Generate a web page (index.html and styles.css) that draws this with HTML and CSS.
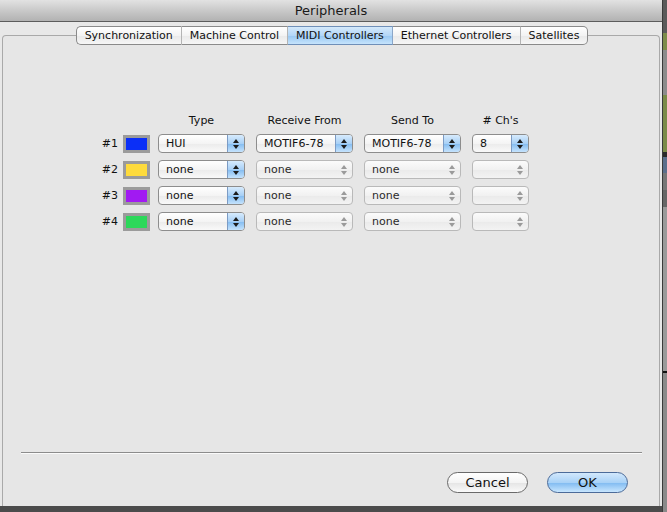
FILE: index.html
```html
<!DOCTYPE html>
<html lang="en">
<head>
    <meta charset="UTF-8">
    <title>Peripherals</title>
    <link rel="stylesheet" href="styles.css">
</head>
<body>
    <div class="screen">
        <div class="window">
            <div class="titlebar">Peripherals</div>
            <div class="content">
                <div class="tabs">
                    <div class="tab first">Synchronization</div>
                    <div class="tab">Machine Control</div>
                    <div class="tab selected">MIDI Controllers</div>
                    <div class="tab">Ethernet Controllers</div>
                    <div class="tab last">Satellites</div>
                </div>
                <div class="panel">
                    <div class="table">
                        <div class="row head">
                            <div class="num"></div>
                            <div class="swatch-col"></div>
                            <div class="col-type">Type</div>
                            <div class="col-port">Receive From</div>
                            <div class="col-port">Send To</div>
                            <div class="col-ch"># Ch's</div>
                        </div>
                        <div class="row">
                            <div class="num">#1</div>
                            <div class="swatch"><span class="blue"></span></div>
                            <div class="popup col-type"><span class="val">HUI</span><span class="arrows"></span></div>
                            <div class="popup col-port"><span class="val">MOTIF6-78</span><span class="arrows"></span></div>
                            <div class="popup col-port"><span class="val">MOTIF6-78</span><span class="arrows"></span></div>
                            <div class="popup col-ch"><span class="val">8</span><span class="arrows"></span></div>
                        </div>
                        <div class="row">
                            <div class="num">#2</div>
                            <div class="swatch"><span class="yellow"></span></div>
                            <div class="popup col-type"><span class="val">none</span><span class="arrows"></span></div>
                            <div class="popup off col-port"><span class="val">none</span><span class="arrows"></span></div>
                            <div class="popup off col-port"><span class="val">none</span><span class="arrows"></span></div>
                            <div class="popup off col-ch"><span class="val"></span><span class="arrows"></span></div>
                        </div>
                        <div class="row">
                            <div class="num">#3</div>
                            <div class="swatch"><span class="purple"></span></div>
                            <div class="popup col-type"><span class="val">none</span><span class="arrows"></span></div>
                            <div class="popup off col-port"><span class="val">none</span><span class="arrows"></span></div>
                            <div class="popup off col-port"><span class="val">none</span><span class="arrows"></span></div>
                            <div class="popup off col-ch"><span class="val"></span><span class="arrows"></span></div>
                        </div>
                        <div class="row">
                            <div class="num">#4</div>
                            <div class="swatch"><span class="green"></span></div>
                            <div class="popup col-type"><span class="val">none</span><span class="arrows"></span></div>
                            <div class="popup off col-port"><span class="val">none</span><span class="arrows"></span></div>
                            <div class="popup off col-port"><span class="val">none</span><span class="arrows"></span></div>
                            <div class="popup off col-ch"><span class="val"></span><span class="arrows"></span></div>
                        </div>
                    </div>
                    <div class="separator"></div>
                    <div class="buttons">
                        <div class="button">Cancel</div>
                        <div class="button default">OK</div>
                    </div>
                </div>
            </div>
        </div>
        <div class="behind">
            <div class="strip s1"></div>
            <div class="strip s2"></div>
            <div class="strip s3"></div>
            <div class="strip s4"></div>
            <div class="strip s5"></div>
            <div class="strip s6"></div>
            <div class="strip s7"></div>
            <div class="strip s8"></div>
            <div class="strip s9"></div>
            <div class="strip s10"></div>
        </div>
    </div>
</body>
</html>
```

FILE: styles.css
```css
body {
    margin: 0;
    background-color: #4b4b4b;
    font-family: "DejaVu Sans", "Liberation Sans", sans-serif;
    font-size: 11px;
    color: #111;
}

.screen {
    display: flex;
    width: 667px;
    height: 512px;
    background-color: #4b4b4b;
}

.window {
    width: 662px;
    height: 506px;
    display: flex;
    flex-direction: column;
    background-color: #e8e8e8;
}

.titlebar {
    height: 21px;
    line-height: 21px;
    text-align: center;
    font-size: 13px;
    color: #1a1a1a;
    background: linear-gradient(#e2e2e2, #c4c4c4 60%, #b2b2b2);
    border-bottom: 1px solid #5c5c5c;
}

.content {
    flex: 1;
    display: flex;
    flex-direction: column;
}

/* tab strip */
.tabs {
    display: flex;
    justify-content: center;
    margin-top: 4px;
    margin-left: 2px;
    height: 19px;
    position: relative;
    z-index: 1;
}

.tab {
    height: 17px;
    line-height: 17px;
    padding: 0 8px;
    border-top: 1px solid #8a8a8a;
    border-bottom: 1px solid #8a8a8a;
    border-right: 1px solid #b4b4b4;
    background: linear-gradient(#ffffff, #f3f3f3 50%, #e9e9e9 51%, #f6f6f6);
    color: #111;
}

.tab.first {
    border-left: 1px solid #8a8a8a;
    border-radius: 5px 0 0 5px;
}

.tab.last {
    border-right: 1px solid #8a8a8a;
    border-radius: 0 5px 5px 0;
}

.tab.selected {
    background: linear-gradient(#d4e9fb, #b3d6f7 50%, #98c7f2 51%, #c6e4fc);
    border-top-color: #6f8fb8;
    border-bottom-color: #6f8fb8;
    border-right-color: #8aa6c8;
}

.panel {
    flex: 1;
    margin: -10px 2px 0 2px;
    border: 1px solid #a9a9a9;
    border-bottom: none;
    border-radius: 4px 4px 0 0;
    background-color: #e6e6e6;
    display: flex;
    flex-direction: column;
}

/* controller table */
.table {
    padding: 77px 0 0 97px;
}

.row {
    display: flex;
    align-items: center;
    height: 19px;
    margin-bottom: 7px;
}

.row.head {
    height: 14px;
    margin-bottom: 7px;
}

.row.head div {
    text-align: center;
}

.num {
    width: 18px;
    margin-right: 5px;
    text-align: right;
    color: #111;
}

.swatch-col {
    width: 27px;
    margin-right: 8px;
}

.swatch {
    width: 21px;
    height: 12px;
    margin-right: 8px;
    border: 3px solid #9b9b9b;
}

.swatch span {
    display: block;
    height: 100%;
}

.blue { background-color: #0b2ff7; }
.yellow { background-color: #fedb3c; }
.purple { background-color: #a11af2; }
.green { background-color: #2cd85a; }

.col-type { width: 87px; margin-right: 11px; }
.col-port { width: 97px; margin-right: 11px; }
.col-ch { width: 57px; }

.popup {
    box-sizing: border-box;
    height: 19px;
    display: flex;
    border: 1px solid #8d8d8d;
    border-radius: 4px;
    background: linear-gradient(#ffffff, #f4f4f4 50%, #ebebeb 51%, #f9f9f9);
    overflow: hidden;
}

.popup .val {
    flex: 1;
    padding-left: 7px;
    line-height: 17px;
    color: #111;
}

.popup .arrows {
    width: 16px;
    display: flex;
    flex-direction: column;
    align-items: center;
    justify-content: center;
    border-left: 1px solid #7c9bc4;
    background: linear-gradient(#d7ebfd, #a8d0f6 50%, #82bbf0 51%, #c5e3fd);
}

.popup .arrows::before,
.popup .arrows::after {
    content: "";
    border-left: 3px solid transparent;
    border-right: 3px solid transparent;
}

.popup .arrows::before {
    border-bottom: 4px solid #1c1c1c;
    margin-bottom: 2px;
}

.popup .arrows::after {
    border-top: 4px solid #1c1c1c;
}

.popup.off {
    border-color: #b9b9b9;
    background: linear-gradient(#fbfbfb, #f1f1f1 50%, #eaeaea 51%, #f3f3f3);
}

.popup.off .val {
    color: #2a2a2a;
}

.popup.off .arrows {
    border-left-color: transparent;
    background: none;
}

.popup.off .arrows::before {
    border-bottom-color: #9a9a9a;
}

.popup.off .arrows::after {
    border-top-color: #9a9a9a;
}

/* bottom */
.separator {
    margin: auto 17px 0 18px;
    border-top: 1px solid #8c8c8c;
    border-bottom: 1px solid #fafafa;
}

.buttons {
    display: flex;
    justify-content: flex-end;
    padding: 18px 31px 13px 0;
}

.button {
    box-sizing: border-box;
    width: 81px;
    height: 21px;
    line-height: 19px;
    margin-left: 19px;
    text-align: center;
    font-size: 13px;
    color: #111;
    border: 1px solid #6a6a6a;
    border-radius: 11px;
    background: linear-gradient(#ffffff, #f4f4f4 50%, #e4e4e4 51%, #fafafa);
}

.button.default {
    border-color: #4c6b99;
    background: linear-gradient(#d2e8fc, #a9d2f7 50%, #7fbaf1 51%, #c8e6fe);
}

/* app window behind the dialog */
.behind {
    flex: 1;
    display: flex;
    flex-direction: column;
    border-left: 1px solid #3a3a3a;
}

.strip { height: 10px; }
.s1 { height: 33px; background-color: #5a5a5a; }
.s2 { height: 17px; background-color: #7d8c4a; }
.s3 { height: 45px; background-color: #8c8c8c; }
.s4 { height: 57px; background-color: #7b8b48; }
.s5 { height: 5px; background-color: #2a2a2a; }
.s6 { height: 16px; background-color: #5b6f8c; }
.s7 { height: 17px; background-color: #777777; }
.s8 { height: 17px; background-color: #666666; }
.s9 { height: 164px; background-color: #9a9a9a; border-bottom: 2px solid #111; }
.s10 { height: 139px; background-color: #8a8a8a; }
```
